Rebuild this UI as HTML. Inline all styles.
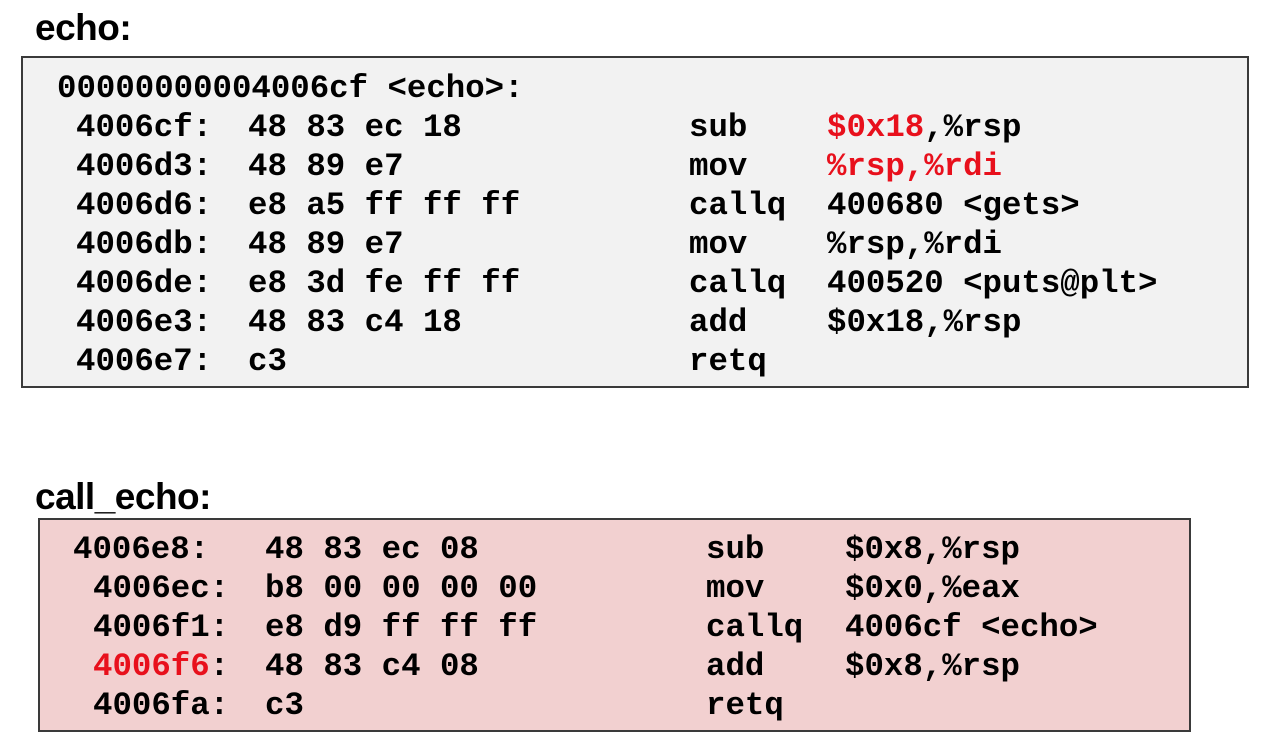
<!DOCTYPE html>
<html><head><meta charset="utf-8"><style>
body{margin:0;width:1262px;height:742px;background:#fff;position:relative;overflow:hidden}
.t{position:absolute;font-family:"Liberation Sans",sans-serif;font-weight:bold;font-size:37px;line-height:40px;color:#000;letter-spacing:-0.5px}
.box{position:absolute;box-sizing:border-box;border:2px solid #3a3a3a}
.c{position:absolute;font-family:"Liberation Mono",monospace;font-weight:bold;font-size:32.4px;line-height:39px;white-space:pre;color:#000;margin-top:2px}
.r{color:#e8101c}
</style></head><body>
<div class="t" style="left:35px;top:8px">echo:</div>
<div class="box" style="left:21px;top:56px;width:1228px;height:332px;background:#f2f2f2"></div>
<div class="c" style="left:57px;top:67px">00000000004006cf &lt;echo&gt;:</div>
<div class="c" style="left:76px;top:106px">4006cf:</div><div class="c" style="left:248px;top:106px">48 83 ec 18</div><div class="c" style="left:689px;top:106px">sub</div><div class="c" style="left:827px;top:106px"><span class="r">$0x18</span>,%rsp</div>
<div class="c" style="left:76px;top:145px">4006d3:</div><div class="c" style="left:248px;top:145px">48 89 e7</div><div class="c" style="left:689px;top:145px">mov</div><div class="c r" style="left:827px;top:145px">%rsp,%rdi</div>
<div class="c" style="left:76px;top:184px">4006d6:</div><div class="c" style="left:248px;top:184px">e8 a5 ff ff ff</div><div class="c" style="left:689px;top:184px">callq</div><div class="c" style="left:827px;top:184px">400680 &lt;gets&gt;</div>
<div class="c" style="left:76px;top:223px">4006db:</div><div class="c" style="left:248px;top:223px">48 89 e7</div><div class="c" style="left:689px;top:223px">mov</div><div class="c" style="left:827px;top:223px">%rsp,%rdi</div>
<div class="c" style="left:76px;top:262px">4006de:</div><div class="c" style="left:248px;top:262px">e8 3d fe ff ff</div><div class="c" style="left:689px;top:262px">callq</div><div class="c" style="left:827px;top:262px">400520 &lt;puts@plt&gt;</div>
<div class="c" style="left:76px;top:301px">4006e3:</div><div class="c" style="left:248px;top:301px">48 83 c4 18</div><div class="c" style="left:689px;top:301px">add</div><div class="c" style="left:827px;top:301px">$0x18,%rsp</div>
<div class="c" style="left:76px;top:340px">4006e7:</div><div class="c" style="left:248px;top:340px">c3</div><div class="c" style="left:689px;top:340px">retq</div>

<div class="t" style="left:35px;top:477px">call_echo:</div>
<div class="box" style="left:38px;top:518px;width:1153px;height:214px;background:#f2d0d0"></div>
<div class="c" style="left:73px;top:528px">4006e8:</div><div class="c" style="left:265px;top:528px">48 83 ec 08</div><div class="c" style="left:706px;top:528px">sub</div><div class="c" style="left:845px;top:528px">$0x8,%rsp</div>
<div class="c" style="left:93px;top:567px">4006ec:</div><div class="c" style="left:265px;top:567px">b8 00 00 00 00</div><div class="c" style="left:706px;top:567px">mov</div><div class="c" style="left:845px;top:567px">$0x0,%eax</div>
<div class="c" style="left:93px;top:606px">4006f1:</div><div class="c" style="left:265px;top:606px">e8 d9 ff ff ff</div><div class="c" style="left:706px;top:606px">callq</div><div class="c" style="left:845px;top:606px">4006cf &lt;echo&gt;</div>
<div class="c" style="left:93px;top:645px"><span class="r">4006f6</span>:</div><div class="c" style="left:265px;top:645px">48 83 c4 08</div><div class="c" style="left:706px;top:645px">add</div><div class="c" style="left:845px;top:645px">$0x8,%rsp</div>
<div class="c" style="left:93px;top:684px">4006fa:</div><div class="c" style="left:265px;top:684px">c3</div><div class="c" style="left:706px;top:684px">retq</div>
</body></html>
